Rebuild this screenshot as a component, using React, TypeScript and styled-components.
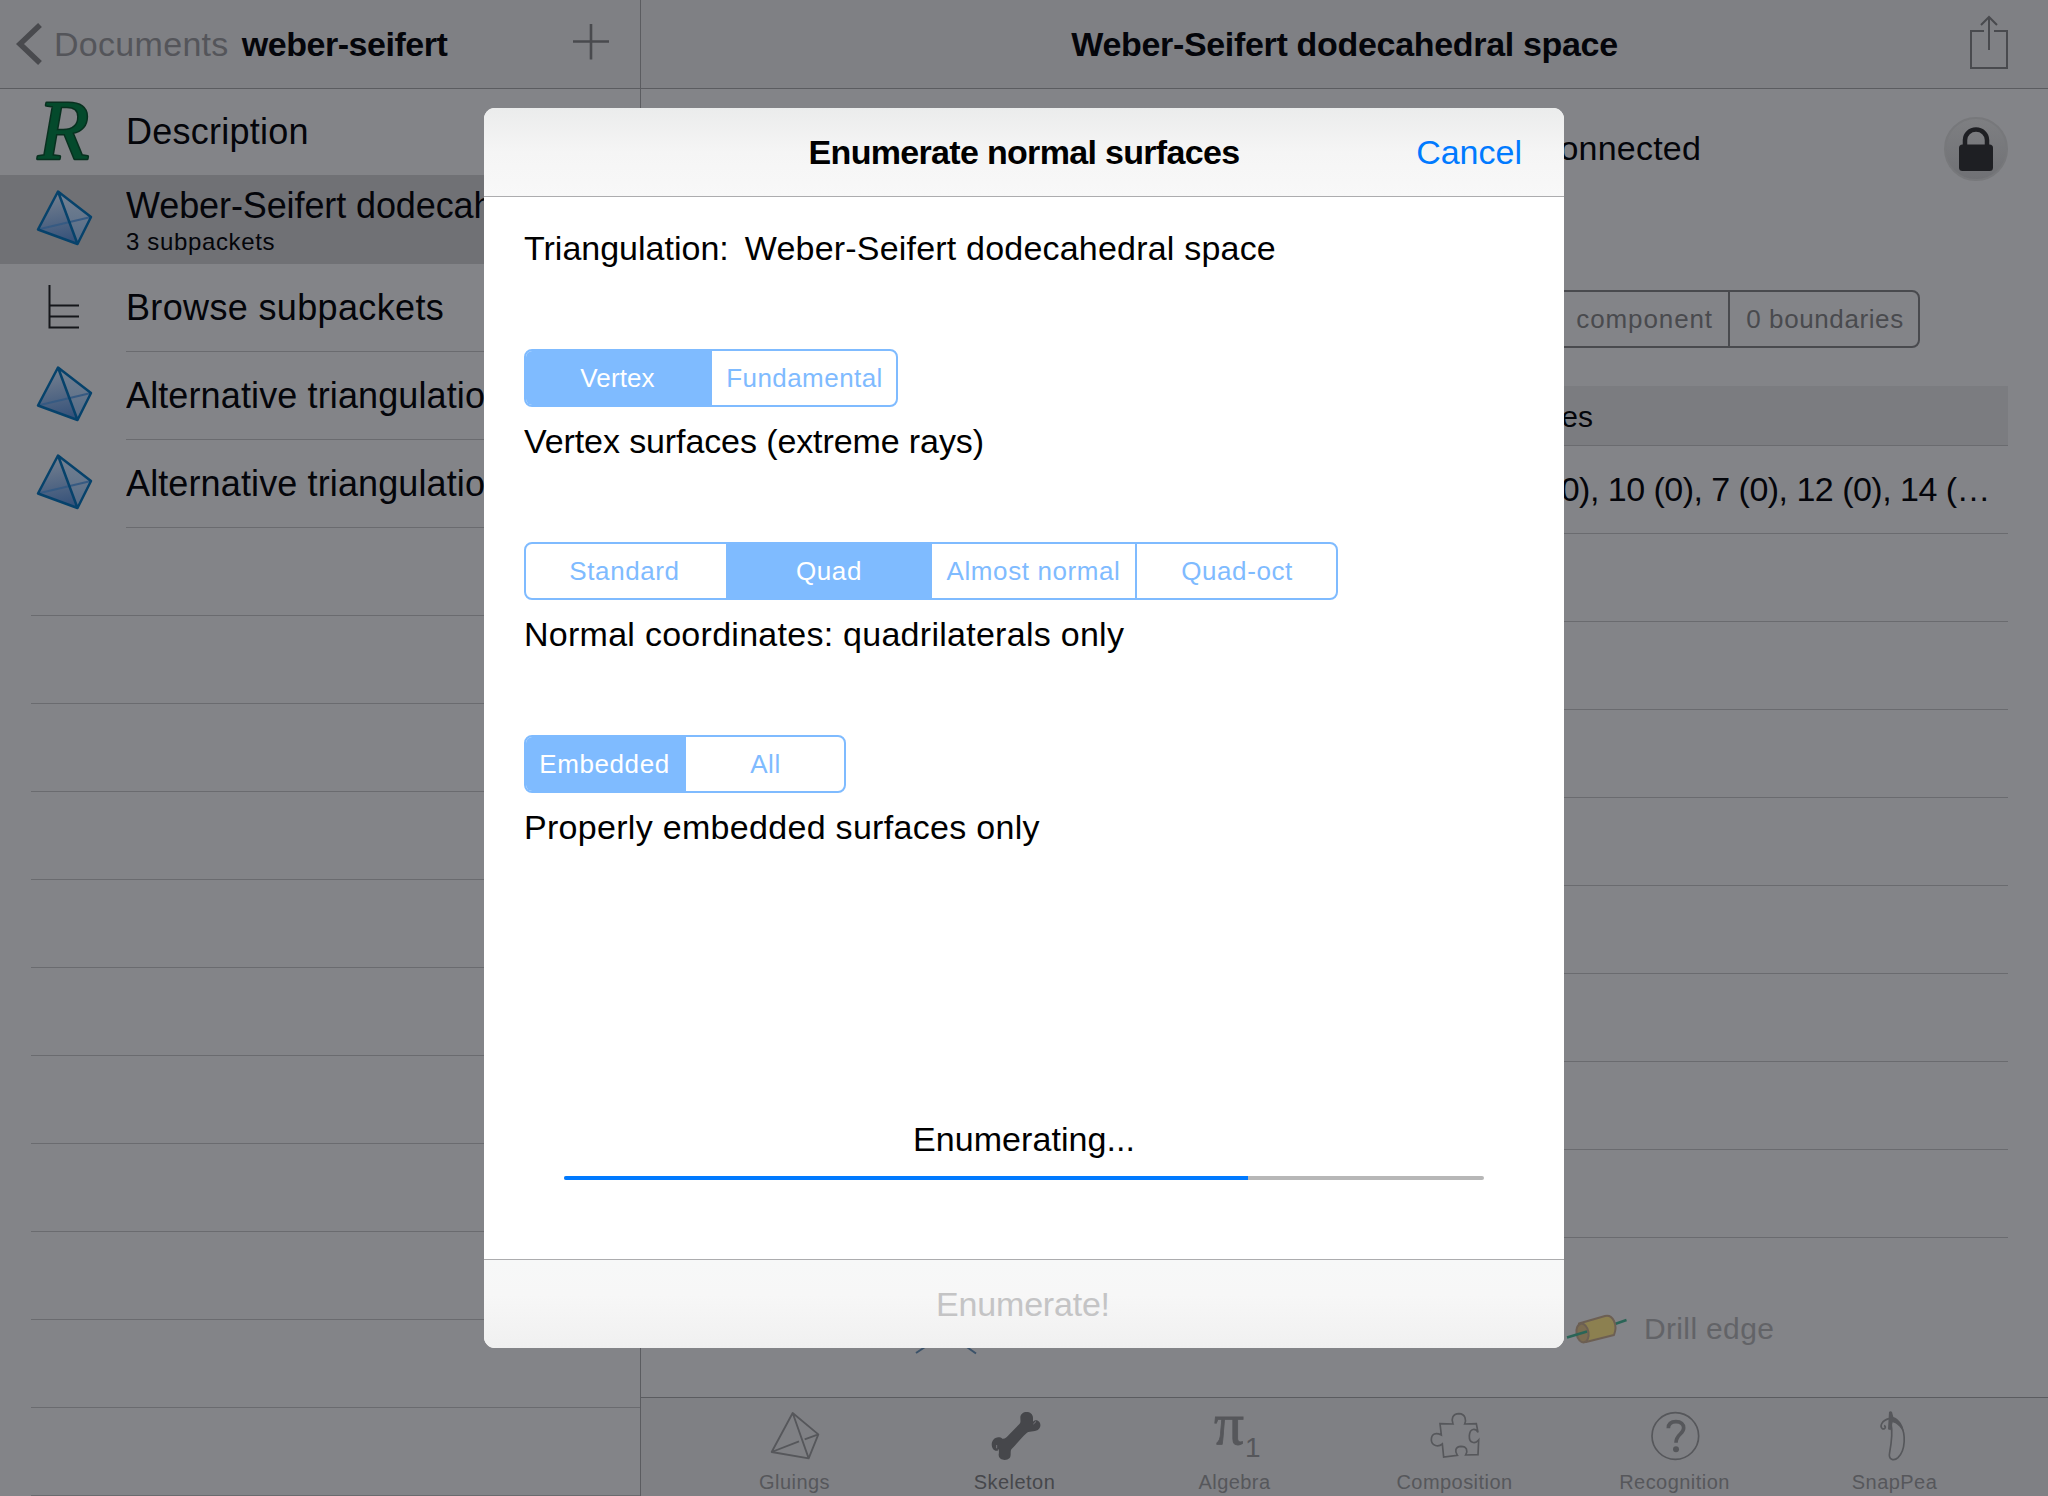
import React from "react";
import styled, { createGlobalStyle } from "styled-components";

const Global = createGlobalStyle`
  *, *::before, *::after { box-sizing: border-box; }
  body { margin: 0; background: #838488; }
  svg { display: block; overflow: visible; flex: none; }
`;

const c = {
  page: "#838488",
  bar: "#7f8084",
  barLine: "#5b5c60",
  line: "#6a6b6f",
  ink: "#04050a",
  tint: "#494a4e",
  soft: "#54555a",
  blue: "#007aff",
  paleBlue: "#7fbbff",
};

const Screen = styled.div`
  position: relative;
  display: flex;
  width: 2048px;
  height: 1496px;
  overflow: hidden;
  background: ${c.page};
  color: ${c.ink};
  font-family: "Liberation Sans", Arial, sans-serif;
  font-size: 34px;
  white-space: nowrap;
`;

const Text = styled.span<{ $track?: number; $bold?: boolean; $color?: string }>`
  letter-spacing: ${(p) => p.$track ?? 0}px;
  font-weight: ${(p) => (p.$bold ? 700 : 400)};
  color: ${(p) => p.$color ?? "inherit"};
`;

/* ---------- sidebar ---------- */

const Sidebar = styled.aside`
  display: flex;
  flex-direction: column;
  width: 641px;
  flex: none;
  border-right: 1px solid ${c.barLine};
`;

const NavBar = styled.header`
  display: flex;
  align-items: center;
  flex: none;
  height: 89px;
  background: ${c.bar};
  border-bottom: 1px solid ${c.barLine};
`;

const SideNav = styled(NavBar)`
  padding-left: 16px;
  padding-right: 31px;
`;

const BackButton = styled.div`
  display: flex;
  align-items: center;
  gap: 12px;
  margin-right: 13px;
  color: ${c.soft};
`;

const AddButton = styled.div`
  padding-bottom: 4px;
`;

const Spacer = styled.div`
  flex: 1;
`;

const Row = styled.div<{ $selected?: boolean }>`
  display: flex;
  align-items: stretch;
  flex: none;
  height: 88px;
  ${(p) => p.$selected && "height: 89px; margin-top: -1px; padding-top: 1px; background: #707175;"}
`;

const List = styled.div`
  display: flex;
  flex-direction: column;
  margin-top: -1px;
`;

const RowIcon = styled.div`
  display: flex;
  align-items: center;
  justify-content: center;
  width: 126px;
  flex: none;
  padding: 0 0 2px;
`;

const RowBody = styled.div<{ $line?: boolean }>`
  display: flex;
  flex-direction: column;
  justify-content: center;
  flex: 1;
  min-width: 0;
  font-size: 36px;
  line-height: 40px;
  border-bottom: 1px solid ${(p) => (p.$line ? c.line : "transparent")};
`;

const RowTitle = styled(Text)`
  overflow: hidden;
  text-overflow: ellipsis;
`;

const Subtitle = styled.div`
  font-size: 24px;
  line-height: 28px;
  padding-top: 2px;
  margin-bottom: -3px;
`;

const EmptyRow = styled.div`
  height: 88px;
  flex: none;
  margin-left: 31px;
  border-bottom: 1px solid ${c.line};
`;

/* ---------- detail pane ---------- */

const Detail = styled.main`
  display: flex;
  flex-direction: column;
  flex: 1;
  min-width: 0;
`;

const DetailNav = styled(NavBar)`
  display: grid;
  grid-template-columns: 1fr auto 1fr;
  padding-right: 40px;
  padding-left: 40px;
`;

const NavEnd = styled.div`
  display: flex;
  justify-content: flex-end;
`;

const ShareSlot = styled(NavEnd)`
  padding-bottom: 5px;
`;

const StatusRow = styled.div`
  display: flex;
  align-items: center;
  justify-content: flex-end;
  height: 64px;
  margin: 28px 40px 0 0;
  gap: 243px;
  > span { padding-bottom: 2px; }
`;

const LockBadge = styled.div`
  display: flex;
  align-items: center;
  justify-content: center;
  width: 64px;
  height: 64px;
  border-radius: 50%;
  border: 2px solid #77787b;
  background: linear-gradient(#7e7f82, #707175);
`;

const Counts = styled.div`
  display: flex;
  align-self: flex-end;
  height: 58px;
  margin: 109px 128px 38px 0;
  border: 2px solid ${c.tint};
  border-radius: 8px;
  color: ${c.tint};
  font-size: 26px;
  word-spacing: 4px;
`;

const Count = styled.div`
  display: flex;
  align-items: center;
  justify-content: flex-end;
  padding: 0 15px 0 16px;
  & + & {
    width: 190px;
    justify-content: center;
    padding: 0 0 0 2px;
    border-left: 2px solid ${c.tint};
    word-spacing: 0;
  }
`;

const Table = styled.section`
  margin: 0 40px;
`;

const TableHead = styled.div`
  display: flex;
  align-items: center;
  justify-content: flex-end;
  height: 60px;
  padding: 3px 415px 0 0;
  background: #7b7c80;
  border-bottom: 1px solid ${c.line};
  font-size: 30px;
`;

const TableRow = styled.div`
  display: flex;
  align-items: center;
  justify-content: flex-end;
  height: 88px;
  padding: 0 18px 1px 0;
  border-bottom: 1px solid ${c.line};
`;

const ToolRow = styled.div`
  display: flex;
  align-items: flex-start;
  flex: 1;
  padding: 70px 0 0 274px;
  font-size: 30px;
  color: #626367;
`;

const PlainTool = styled.div`
  padding-top: 34px;
  width: 652px;
`;

const DrillTool = styled.div`
  display: flex;
  align-items: center;
  gap: 17px;
  height: 42px;
`;

const TabBar = styled.nav`
  display: flex;
  justify-content: center;
  flex: none;
  height: 99px;
  background: ${c.bar};
  border-top: 1px solid ${c.barLine};
`;

const Tab = styled.div<{ $active?: boolean }>`
  display: flex;
  flex-direction: column;
  align-items: center;
  width: 220px;
  padding-top: 14px;
  gap: 10px;
  font-size: 20px;
  line-height: 24px;
  color: ${(p) => (p.$active ? "#46474b" : "#56575b")};
`;

/* ---------- form sheet ---------- */

const Sheet = styled.section`
  position: absolute;
  left: 484px;
  top: 108px;
  display: flex;
  flex-direction: column;
  width: 1080px;
  height: 1240px;
  border-radius: 11px;
  overflow: hidden;
  background: #fff;
  color: #000;
`;

const SheetHeader = styled.header`
  display: grid;
  grid-template-columns: 1fr auto 1fr;
  align-items: center;
  height: 89px;
  padding: 0 42px;
  background: linear-gradient(#ebecec, #f5f5f5 50%, #f8f8f8);
  border-bottom: 1px solid #acacae;
`;

const SheetBody = styled.div`
  display: flex;
  flex-direction: column;
  flex: 1;
  padding: 31px 40px 79px;
  line-height: 40px;
`;

const Option = styled.div`
  display: flex;
  flex-direction: column;
  align-items: flex-start;
  gap: 14px;
  margin-top: 81px;
`;

const Triangulation = styled.div`
  display: flex;
  gap: 16px;
`;

const Segments = styled.div`
  display: flex;
  height: 58px;
  border: 2px solid ${c.paleBlue};
  border-radius: 8px;
  overflow: hidden;
  font-size: 26px;
`;

const Segment = styled.div<{ $w: number; $on?: boolean; $rule?: boolean }>`
  display: flex;
  align-items: center;
  justify-content: center;
  width: ${(p) => p.$w}px;
  padding-bottom: 1px;
  color: ${(p) => (p.$on ? "#fff" : c.paleBlue)};
  background: ${(p) => (p.$on ? c.paleBlue : "transparent")};
  border-right: ${(p) => (p.$rule ? `2px solid ${c.paleBlue}` : "none")};
  &:first-child { padding-right: 3px; }
  &:last-child { padding-left: 1px; }
`;

const Progress = styled.div`
  display: flex;
  flex-direction: column;
  align-items: center;
  gap: 17px;
  margin: auto 40px 0;
`;

const Track = styled.div`
  width: 100%;
  height: 4px;
  border-radius: 2px;
  overflow: hidden;
  background: #b7b7b7;
`;

const Fill = styled.div`
  height: 100%;
  background: ${c.blue};
`;

const SheetFooter = styled.footer`
  display: flex;
  align-items: center;
  justify-content: center;
  height: 89px;
  padding-right: 2px;
  background: linear-gradient(#f7f8f8, #f7f7f7 40%, #f0f0f0);
  border-top: 1px solid #acacae;
`;

/* ---------- icons ---------- */

const Tetrahedron = () => (
  <svg width="56" height="58" viewBox="35 190 56 58">
    <defs>
      <linearGradient id="face" x1="0.3" y1="0" x2="0.45" y2="1">
        <stop offset="0" stopColor="#788290" />
        <stop offset="1" stopColor="#36527a" />
      </linearGradient>
      <linearGradient id="side" x1="0.5" y1="0" x2="0.5" y2="1">
        <stop offset="0" stopColor="#748191" />
        <stop offset="1" stopColor="#566b86" />
      </linearGradient>
    </defs>
    <path d="M58 191.500L77.500 244L38 229.500Z" fill="url(#face)" />
    <path d="M58 191.500L91 217L77.500 244Z" fill="url(#side)" />
    <path d="M38 229.500L91 217" stroke="#365a82" strokeWidth="2" />
    <path
      d="M58 191.500L91 217L77.500 244L38 229.500ZM58 191.500L77.500 244"
      fill="none"
      stroke="#06426b"
      strokeWidth="2.500"
      strokeLinejoin="round"
    />
  </svg>
);

const LetterR = () => (
  <svg width="56" height="60" viewBox="0 0 56 60">
    <text
      x="3"
      y="57.500"
      fontFamily="Liberation Serif, serif"
      fontStyle="italic"
      fontSize="84"
      textLength="51"
      lengthAdjust="spacingAndGlyphs"
      fill="#044a2c"
      stroke="#08301f"
      strokeWidth="3"
      strokeLinejoin="round"
      paintOrder="stroke"
    >
      R
    </text>
  </svg>
);

const Tree = () => (
  <svg width="32" height="44" viewBox="-1 0 32 44">
    <path
      d="M1.500 0V43M0.500 20.500H31M0.500 31.500H31M0.500 42.500H31"
      fill="none"
      stroke="#15161a"
      strokeWidth="2"
    />
  </svg>
);

const Chevron = () => (
  <svg width="26" height="42" viewBox="16 23 26 42">
    <path d="M40 25L20 44L40 63" fill="none" stroke={c.tint} strokeWidth="5.500" />
  </svg>
);

const Plus = () => (
  <svg width="36" height="36" viewBox="0 0 36 36">
    <path d="M18 0V35.500M0 17.500H36" stroke={c.tint} strokeWidth="2.600" />
  </svg>
);

const Share = () => (
  <svg width="38" height="54" viewBox="1970 14 38 54">
    <path
      d="M1984 30H1971V67H2007V30H1994M1989 49V16M1981 24L1989 16L1997 24"
      fill="none"
      stroke={c.tint}
      strokeWidth="2"
    />
  </svg>
);

const Lock = () => (
  <svg width="34" height="44" viewBox="0 0 34 44">
    <path d="M6 20V13A11 10.500 0 0 1 28 13V20" fill="none" stroke="#1e1f23" strokeWidth="4.500" />
    <rect x="0" y="17.500" width="34" height="26.500" rx="3.500" fill="#1e1f23" />
  </svg>
);

const Legs = () => (
  <svg width="62" height="12" viewBox="915 1342 62 12">
    <path d="M916 1353L928 1345M964 1345L976 1353.500" stroke="#3b5269" strokeWidth="2" />
  </svg>
);

const Drill = () => (
  <svg width="60" height="30" viewBox="1568 1313 60 30">
    <path d="M1616 1323L1627.500 1319" stroke="#2a6557" strokeWidth="2.500" />
    <path
      d="M1580 1322.500L1606 1315C1614 1313 1619 1324 1615 1334L1587 1341Z"
      fill="#8c8050"
      stroke="#6c5f53"
      strokeWidth="2"
      strokeLinejoin="round"
    />
    <ellipse cx="1583.500" cy="1332" rx="6" ry="9.500" transform="rotate(-10 1583.5 1332)" fill="#7b6c51" stroke="#6c5f53" strokeWidth="2" />
    <path d="M1568 1336.500L1588 1330.500" stroke="#2a6557" strokeWidth="2.500" />
  </svg>
);

const TabIcon = ({ x, children }: { x: number; children: React.ReactNode }) => (
  <svg width="48" height="48" viewBox={`${x} 51 144 144`} fill="none" stroke="currentColor" strokeWidth="5.500">
    {children}
  </svg>
);

const tabs = [
  {
    label: "Gluings",
    icon: (
      <TabIcon x={90}>
        <path d="M155 54L232 118L203 190L92 171ZM155 54L203 190M92 171L174 139M191 133L232 118" strokeLinejoin="round" />
      </TabIcon>
    ),
  },
  {
    label: "Skeleton",
    active: true,
    icon: (
      <TabIcon x={750}>
        <g fill="currentColor" stroke="none">
          <path d="M838 68C838 45 877 45 876 70L876 80C890 66 906 88 894 101C886 112 868 106 858 113C840 128 826 148 812 162C806 168 812 180 806 189C796 199 774 196 773 180L773 166C757 174 746 150 756 136C764 124 778 126 784 131C792 132 797 127 801 122L836 86C840 81 838 75 838 68Z" />
        </g>
        <path d="M884 79Q882 85 877 87M767 150L767 160M772 163V176" stroke={c.bar} strokeWidth="2.500" />
      </TabIcon>
    ),
  },
  {
    label: "Algebra",
    icon: (
      <svg width="48" height="48" viewBox="1210 1412 48 48" fill="currentColor">
        <text x="1213" y="1444" fontFamily="Liberation Serif, serif" fontSize="59" textLength="30" lengthAdjust="spacingAndGlyphs" stroke="currentColor" strokeWidth="0.800">
          π
        </text>
        <text x="1244" y="1457" fontFamily="Liberation Sans, sans-serif" fontSize="28">
          1
        </text>
      </svg>
    ),
  },
  {
    label: "Composition",
    icon: (
      <TabIcon x={30}>
        <path
          d="M57 86L96 87C90 74 94 56 114 56C134 57 136 75 131 87L166 86L171 112C164 100 147 98 145 122C144 145 162 148 173 135L171 179L134 180C141 168 138 154 120 154C102 155 101 170 109 181L68 186L64 147C52 157 32 153 31 135C31 115 45 112 61 120Z"
          strokeWidth="5"
        />
      </TabIcon>
    ),
  },
  {
    label: "Recognition",
    icon: (
      <TabIcon x={692}>
        <circle cx="765" cy="123" r="70" strokeWidth="5" />
        <path d="M744 100C744 86 752 80 767 80C782 80 790 88 790 99C790 117 767 118 767 143" strokeWidth="11" />
        <circle cx="767" cy="163" r="9" fill="currentColor" stroke="none" />
      </TabIcon>
    ),
  },
  {
    label: "SnapPea",
    icon: (
      <TabIcon x={1352}>
        <path d="M1412 84C1418 115 1413 145 1408 172C1403 195 1421 199 1433 188C1457 165 1455 115 1443 95" strokeWidth="5" />
        <path d="M1406 51Q1411 47 1415 51L1419 66C1435 71 1450 90 1450 112C1440 95 1428 84 1417 82L1411 106L1403 103Z" fill="currentColor" stroke="none" />
        <path d="M1406 71C1385 76 1377 94 1386 101C1394 105 1399 94 1391 92" strokeWidth="5" />
      </TabIcon>
    ),
  },
];

const sideRows = [
  { title: "Description", icon: <LetterR />, track: 0.25 },
  { title: "Weber-Seifert dodecahedral space", sub: "3 subpackets", icon: <Tetrahedron />, track: -0.1, selected: true },
  { title: "Browse subpackets", icon: <Tree />, track: 0.35, line: true },
  { title: "Alternative triangulation", icon: <Tetrahedron />, track: 0.12, line: true },
  { title: "Alternative triangulation", icon: <Tetrahedron />, track: 0.12, line: true },
];

type Item = { label: string; w: number; on?: boolean; rule?: boolean; track?: number };

const options: { note: string; track: number; items: Item[] }[] = [
  {
    note: "Vertex surfaces (extreme rays)",
    track: -0.1,
    items: [
      { label: "Vertex", w: 186, on: true, track: 0.1 },
      { label: "Fundamental", w: 184, track: 0.45 },
    ],
  },
  {
    note: "Normal coordinates: quadrilaterals only",
    track: 0.27,
    items: [
      { label: "Standard", w: 200 },
      { label: "Quad", w: 206, on: true },
      { label: "Almost normal", w: 205, rule: true },
      { label: "Quad-oct", w: 199 },
    ],
  },
  {
    note: "Properly embedded surfaces only",
    track: 0.3,
    items: [
      { label: "Embedded", w: 160, on: true },
      { label: "All", w: 158 },
    ],
  },
];

const progress = 684 / 920;

export default function App() {
  return (
    <Screen>
      <Global />
      <Sidebar>
        <SideNav>
          <BackButton>
            <Chevron />
            <Text $track={0.3}>Documents</Text>
          </BackButton>
          <Text $bold $track={-0.45}>weber-seifert</Text>
          <Spacer />
          <AddButton>
            <Plus />
          </AddButton>
        </SideNav>
        <List>
          {sideRows.map((r, i) => (
            <Row key={i} $selected={r.selected}>
              <RowIcon>{r.icon}</RowIcon>
              <RowBody $line={r.line}>
                <RowTitle $track={r.track}>{r.title}</RowTitle>
                {r.sub && (
                  <Subtitle>
                    <Text $track={0.65}>{r.sub}</Text>
                  </Subtitle>
                )}
              </RowBody>
            </Row>
          ))}
          {Array.from({ length: 11 }, (_, i) => (
            <EmptyRow key={i} />
          ))}
        </List>
      </Sidebar>

      <Detail>
        <DetailNav>
          <span />
          <Text $bold $track={-0.32}>Weber-Seifert dodecahedral space</Text>
          <ShareSlot>
            <Share />
          </ShareSlot>
        </DetailNav>
        <StatusRow>
          <Text $track={0.2}>connected</Text>
          <LockBadge>
            <Lock />
          </LockBadge>
        </StatusRow>
        <Counts>
          <Count>
            <Text $track={0.9}>1 component</Text>
          </Count>
          <Count>
            <Text $track={0.6}>0 boundaries</Text>
          </Count>
        </Counts>
        <Table>
          <TableHead>Degrees</TableHead>
          <TableRow>
            <Text $track={-0.52}>(0), 10 (0), 7 (0), 12 (0), 14 (…</Text>
          </TableRow>
          {Array.from({ length: 8 }, (_, i) => (
            <TableRow key={i} />
          ))}
        </Table>
        <ToolRow>
          <PlainTool>
            <Legs />
          </PlainTool>
          <DrillTool>
            <Drill />
            <Text $track={0.35}>Drill edge</Text>
          </DrillTool>
        </ToolRow>
        <TabBar>
          {tabs.map((t) => (
            <Tab key={t.label} $active={t.active}>
              {t.icon}
              <Text $track={0.45}>{t.label}</Text>
            </Tab>
          ))}
        </TabBar>
      </Detail>

      <Sheet>
        <SheetHeader>
          <span />
          <Text $bold $track={-0.68}>Enumerate normal surfaces</Text>
          <NavEnd>
            <Text $color={c.blue}>Cancel</Text>
          </NavEnd>
        </SheetHeader>
        <SheetBody>
          <Triangulation>
            <Text>Triangulation:</Text>
            <Text $track={0.2}>Weber-Seifert dodecahedral space</Text>
          </Triangulation>
          {options.map((o) => (
            <Option key={o.note}>
              <Segments>
                {o.items.map((s) => (
                  <Segment key={s.label} $w={s.w} $on={s.on} $rule={s.rule}>
                    <Text $track={s.track ?? 0.6}>{s.label}</Text>
                  </Segment>
                ))}
              </Segments>
              <Text $track={o.track}>{o.note}</Text>
            </Option>
          ))}
          <Progress>
            <Text $track={0.05}>Enumerating...</Text>
            <Track>
              <Fill style={{ width: `${progress * 100}%` }} />
            </Track>
          </Progress>
        </SheetBody>
        <SheetFooter>
          <Text $color="#c4c4c5" $track={-0.2}>Enumerate!</Text>
        </SheetFooter>
      </Sheet>
    </Screen>
  );
}
